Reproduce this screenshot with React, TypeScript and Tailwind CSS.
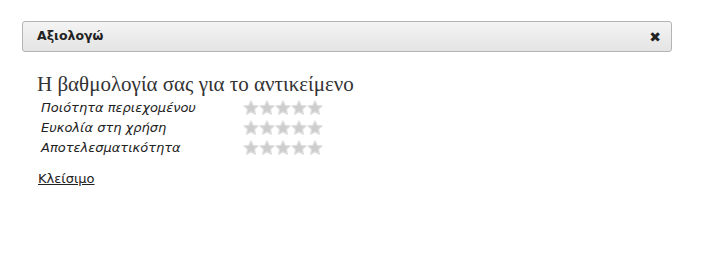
import React from "react";

const Star = () => (
  <svg width="16" height="16" viewBox="0 0 24 24" className="block">
    <path
      d="M12 1.5l3.2 6.5 7.2 1-5.2 5 1.3 7.2L12 17.8l-6.5 3.4 1.3-7.2-5.2-5 7.2-1z"
      fill="#cdcdcd"
      stroke="#dedede"
      strokeWidth="2"
      strokeLinejoin="round"
    />
  </svg>
);

const Stars = () => (
  <div className="flex">
    <Star />
    <Star />
    <Star />
    <Star />
    <Star />
  </div>
);

const rows = ["Ποιότητα περιεχομένου", "Ευκολία στη χρήση", "Αποτελεσματικότητα"];

export default function App() {
  return (
    <div className="w-[705px] h-[270px] bg-white pt-[21px] pl-[22px]" style={{ fontFamily: '"DejaVu Sans", Verdana, sans-serif' }}>
      <div className="w-[650px] h-[31px] border border-[#b4b4b4] rounded-[3px] bg-gradient-to-b from-[#f4f4f4] to-[#e4e4e4] flex items-center justify-between pl-[14px] pr-[10px]">
        <span className="text-[12.5px] font-bold text-[#222]">Αξιολογώ</span>
        <span className="text-[14px] font-bold text-[#222] leading-none">✖</span>
      </div>
      <div className="pl-[15px] pt-[20px]">
        <div className="text-[21px] text-[#333] leading-[24px]" style={{ fontFamily: '"Liberation Serif", "DejaVu Serif", serif' }}>
          Η βαθμολογία σας για το αντικείμενο
        </div>
        <div className="flex flex-col pt-[2px]">
          {rows.map((r) => (
            <div key={r} className="flex items-center h-[20px]">
              <span className="w-[206px] pl-[4px] italic text-[13px] text-[#222]">{r}</span>
              <Stars />
            </div>
          ))}
        </div>
        <a href="#" className="block mt-[11px] pl-[1px] text-[13px] text-[#222] underline">Κλείσιμο</a>
      </div>
    </div>
  );
}
